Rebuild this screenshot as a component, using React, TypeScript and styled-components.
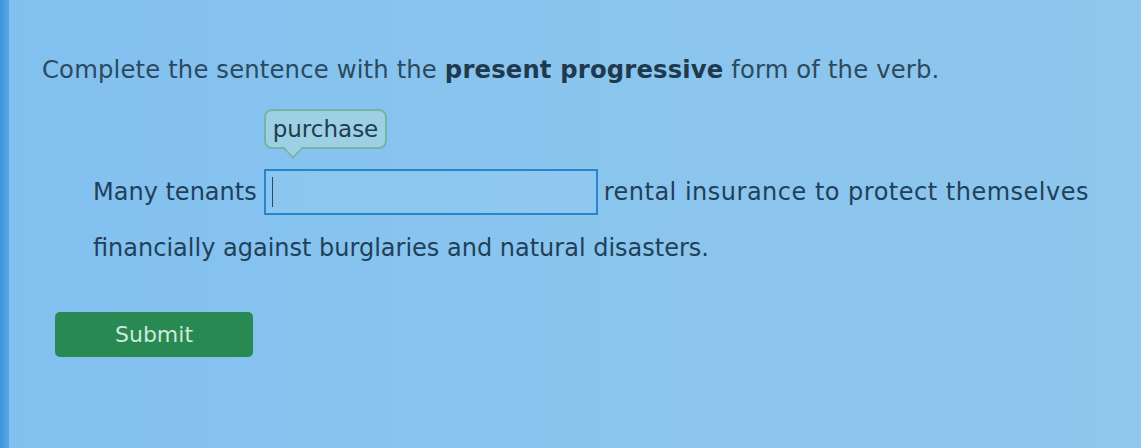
import * as React from 'react'
import styled, { createGlobalStyle } from 'styled-components'

const GlobalStyle = createGlobalStyle`
  html, body {
    margin: 0;
    padding: 0;
    background: #86c2ee;
  }
  body {
    font-family: 'DejaVu Sans', Verdana, sans-serif;
    color: #24435a;
  }
`

const Screen = styled.div`
  display: flex;
  width: 1141px;
  height: 448px;
  overflow: hidden;
  background: linear-gradient(90deg, #82c0f0 0%, #8ac5ee 50%, #8ec6ec 100%);
`

const EdgeStrip = styled.div`
  width: 9px;
  flex: none;
  background: linear-gradient(90deg, #3d94dc, #5aa8e4);
`

const Content = styled.div`
  flex: 1;
  display: flex;
  flex-direction: column;
  padding: 55px 0 0 33px;
`

const Prompt = styled.p`
  margin: 0;
  font-size: 24.3px;
  line-height: 30px;
  letter-spacing: 0.15px;
  color: #2b4a5e;

  strong {
    font-weight: 700;
    color: #1f3a4e;
  }
`

const Sentence = styled.div`
  margin: 79px 0 0 51px;
  font-size: 24px;
  line-height: 56px;
  color: #21405a;
`

const Line = styled.div`
  display: flex;
  align-items: center;
  height: 56px;
  white-space: nowrap;
`

const Tail = styled.span`
  letter-spacing: 0.5px;
`

const BlankWrap = styled.span`
  position: relative;
  display: inline-flex;
  margin: 0 6px 0 7px;
`

const Blank = styled.span`
  display: inline-flex;
  align-items: center;
  width: 324px;
  height: 42px;
  border: 2px solid #2a86cc;
  background: rgba(150, 205, 240, 0.35);
  padding-left: 6px;
  box-sizing: content-box;
`

const Caret = styled.span`
  width: 1.5px;
  height: 30px;
  background: #2d4a60;
`

const Hint = styled.span`
  position: absolute;
  left: 0;
  bottom: 66px;
  padding: 3px 7px;
  font-size: 23px;
  line-height: 30px;
  color: #1f3c52;
  background: #9dd0e2;
  border: 2px solid #74b3a6;
  border-radius: 8px;

  &::after {
    content: '';
    position: absolute;
    left: 19px;
    bottom: -10px;
    width: 14px;
    height: 14px;
    background: #9dd0e2;
    border-right: 2px solid #74b3a6;
    border-bottom: 2px solid #74b3a6;
    transform: rotate(45deg) scale(0.85, 0.85);
  }
`

const SubmitButton = styled.button`
  align-self: flex-start;
  margin: 36px 0 0 13px;
  width: 198px;
  height: 45px;
  border: none;
  border-radius: 5px;
  background: #288a52;
  color: #cfe9dc;
  font-family: 'DejaVu Sans', Verdana, sans-serif;
  font-size: 22px;
  cursor: pointer;
`

export default function App() {
  return (
    <>
      <GlobalStyle />
      <Screen>
        <EdgeStrip />
        <Content>
          <Prompt>
            Complete the sentence with the <strong>present progressive</strong> form of the verb.
          </Prompt>
          <Sentence>
            <Line>
              Many tenants
              <BlankWrap>
                <Hint>purchase</Hint>
                <Blank>
                  <Caret />
                </Blank>
              </BlankWrap>
              <Tail>rental insurance to protect themselves</Tail>
            </Line>
            <Line>financially against burglaries and natural disasters.</Line>
          </Sentence>
          <SubmitButton>Submit</SubmitButton>
        </Content>
      </Screen>
    </>
  )
}
